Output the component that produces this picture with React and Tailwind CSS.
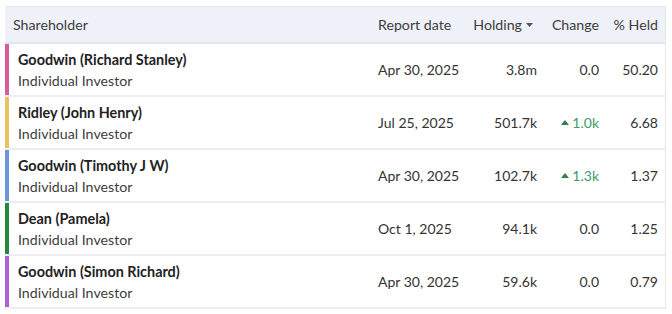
const rows = [
  { name: "Goodwin (Richard Stanley)", type: "Individual Investor", color: "bg-[#d65c9b]", date: "Apr 30, 2025", holding: "3.8m", change: "0.0", up: false, held: "50.20" },
  { name: "Ridley (John Henry)", type: "Individual Investor", color: "bg-[#eac35f]", date: "Jul 25, 2025", holding: "501.7k", change: "1.0k", up: true, held: "6.68" },
  { name: "Goodwin (Timothy J W)", type: "Individual Investor", color: "bg-[#6f95d9]", date: "Apr 30, 2025", holding: "102.7k", change: "1.3k", up: true, held: "1.37" },
  { name: "Dean (Pamela)", type: "Individual Investor", color: "bg-[#23893f]", date: "Oct 1, 2025", holding: "94.1k", change: "0.0", up: false, held: "1.25" },
  { name: "Goodwin (Simon Richard)", type: "Individual Investor", color: "bg-[#b25fd6]", date: "Apr 30, 2025", holding: "59.6k", change: "0.0", up: false, held: "0.79" },
];

export default function App() {
  return (
    <div className="w-[672px] h-[314px] bg-white pt-[6px] pl-[5px] font-['Lato',sans-serif] text-[14px] text-[#333]">
      <div className="w-[661px] border-t border-r border-[#e6e8ee]">
        <div className="flex items-center h-[37px] bg-[#eef1f8] text-[#3d3d3d] border-b-2 border-[#e3e6ec] text-[14.2px]">
          <div className="w-[365px] pl-[8px]">Shareholder</div>
          <div className="w-[95px] pl-[8px]">Report date</div>
          <div className="w-[72px] pr-[4px] flex items-center justify-end">
            Holding
            <svg width="7" height="4" viewBox="0 0 7 4" className="ml-[4px] mt-[1px]"><path d="M0 0h7L3.5 4z" fill="#555" /></svg>
          </div>
          <div className="w-[62px] text-right">Change</div>
          <div className="w-[59px] text-right">% Held</div>
        </div>
        {rows.map((r) => (
          <div key={r.name} className="flex h-[53px] border-b-2 border-[#eceef1]">
            <div className={`w-[4px] ${r.color}`} />
            <div className="w-[361px] pl-[9px] flex flex-col justify-center leading-[21px]">
              <div className="font-bold text-[#222] text-[14.4px]">{r.name}</div>
              <div className="text-[#3d3d3d] text-[14.2px]">{r.type}</div>
            </div>
            <div className="w-[95px] pl-[8px] flex items-center">{r.date}</div>
            <div className="w-[72px] flex items-center justify-end">{r.holding}</div>
            <div className="w-[62px] flex items-center justify-end">
              {r.up ? (
                <span className="flex items-center text-[#3e9a6a]">
                  <svg width="8" height="5" viewBox="0 0 8 5" className="mr-[3px]"><path d="M0 5h8L4 0z" fill="#2f8152" /></svg>
                  {r.change}
                </span>
              ) : (
                r.change
              )}
            </div>
            <div className="w-[59px] flex items-center justify-end">{r.held}</div>
          </div>
        ))}
      </div>
    </div>
  );
}
